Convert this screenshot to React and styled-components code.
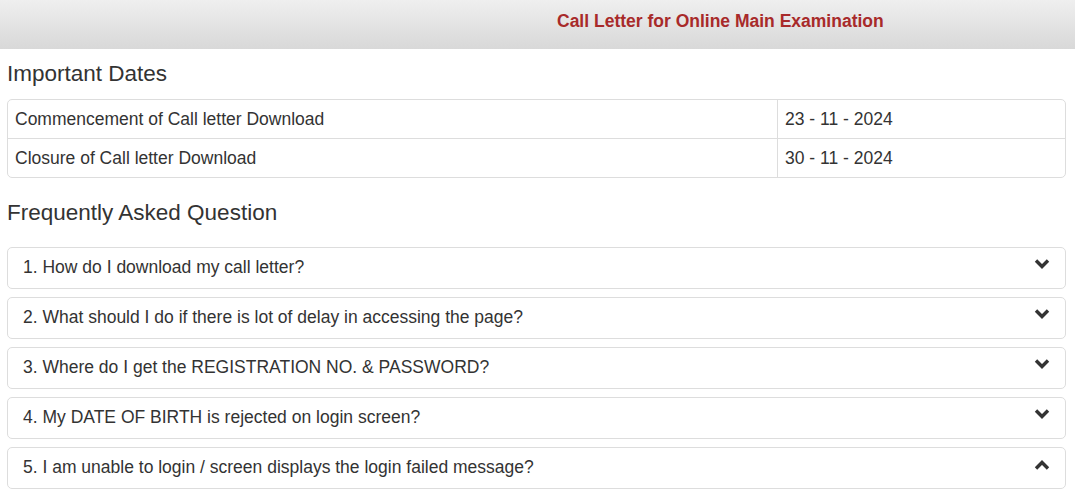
import React from "react";
import styled, { createGlobalStyle } from "styled-components";

const Global = createGlobalStyle`
  html, body { margin: 0; padding: 0; background: #fff; }
  body {
    font-family: "Liberation Sans", Arial, Helvetica, sans-serif;
    color: #333;
    font-size: 17.5px;
  }
`;

const Header = styled.header`
  height: 49px;
  background: linear-gradient(to bottom, #efefef 0%, #d8d8d8 100%);
  display: flex;
  align-items: flex-start;
`;

const Title = styled.h1`
  margin: 0;
  padding: 9px 0 0 557px;
  font-size: 17.5px;
  line-height: 24px;
  font-weight: bold;
  color: #a82a2a;
`;

const Main = styled.main`
  padding: 0 9px 0 7px;
`;

const SectionTitle = styled.h3`
  margin: ${(p) => p.$top}px 0 ${(p) => p.$bottom}px;
  font-size: 22.5px;
  line-height: 24px;
  font-weight: 500;
  color: #333;
`;

const Table = styled.div`
  border: 1px solid #ddd;
  border-radius: 5px;
  display: grid;
  grid-template-columns: 769px 1fr;
  overflow: hidden;
`;

const Cell = styled.div`
  padding: 7px 7px 7px 7px;
  line-height: 24px;
  border-top: ${(p) => (p.$first ? "none" : "1px solid #ddd")};
  border-left: ${(p) => (p.$date ? "1px solid #ddd" : "none")};
`;

const FaqList = styled.div`
  display: flex;
  flex-direction: column;
  gap: 8px;
`;

const Panel = styled.div`
  border: 1px solid #ddd;
  border-radius: 5px;
  height: 42px;
  box-sizing: border-box;
  padding: 6.5px 15px 0 15px;
  display: flex;
  justify-content: space-between;
  align-items: flex-start;
  background: #fff;
`;

const Question = styled.span`
  line-height: 24px;
`;

const Chevron = styled.svg`
  width: 16px;
  height: 10px;
  margin-top: ${(p) => (p.$up ? 5 : 4)}px;
  flex: none;
`;

const dates = [
  ["Commencement of Call letter Download", "23 - 11 - 2024"],
  ["Closure of Call letter Download", "30 - 11 - 2024"],
];

const faqs = [
  "1. How do I download my call letter?",
  "2. What should I do if there is lot of delay in accessing the page?",
  "3. Where do I get the REGISTRATION NO. & PASSWORD?",
  "4. My DATE OF BIRTH is rejected on login screen?",
  "5. I am unable to login / screen displays the login failed message?",
];

function ChevronIcon({ up }) {
  return (
    <Chevron $up={up} viewBox="0 0 16 10">
      <polyline
        points={up ? "2,8.5 8,2.5 14,8.5" : "2,1.5 8,7.5 14,1.5"}
        fill="none"
        stroke="#333"
        strokeWidth="3.4"
        strokeLinecap="butt"
        strokeLinejoin="miter"
      />
    </Chevron>
  );
}

export default function App() {
  return (
    <>
      <Global />
      <Header>
        <Title>Call Letter for Online Main Examination</Title>
      </Header>
      <Main>
        <SectionTitle $top={13} $bottom={13}>Important Dates</SectionTitle>
        <Table>
          {dates.map(([label, date], i) => (
            <React.Fragment key={label}>
              <Cell $first={i === 0}>{label}</Cell>
              <Cell $first={i === 0} $date>
                {date}
              </Cell>
            </React.Fragment>
          ))}
        </Table>
        <SectionTitle $top={23} $bottom={22}>Frequently Asked Question</SectionTitle>
        <FaqList>
          {faqs.map((q, i) => (
            <Panel key={q}>
              <Question>{q}</Question>
              <ChevronIcon up={i === faqs.length - 1} />
            </Panel>
          ))}
        </FaqList>
      </Main>
    </>
  );
}
